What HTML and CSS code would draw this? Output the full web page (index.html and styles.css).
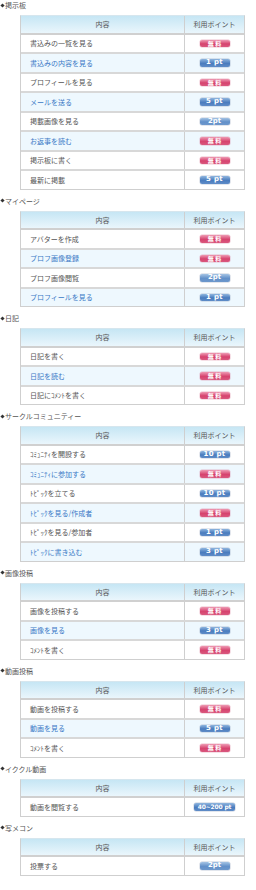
FILE: index.html
```html
<!DOCTYPE html>
<html lang="ja">
<head>
<meta charset="utf-8">
<link rel="stylesheet" href="styles.css">
</head>
<body>
<div class="page">
  <h2 class="sec">掲示板</h2>
  <div class="tbl">
    <div class="row head"><div class="c1">内容</div><div class="c2">利用ポイント</div></div>
    <div class="row"><div class="c1">書込みの一覧を見る</div><div class="c2"><span class="b pink">無 料</span></div></div>
    <div class="row alt"><div class="c1">書込みの内容を見る</div><div class="c2"><span class="b blue">1 pt</span></div></div>
    <div class="row"><div class="c1">プロフィールを見る</div><div class="c2"><span class="b pink">無 料</span></div></div>
    <div class="row alt"><div class="c1">メールを送る</div><div class="c2"><span class="b blue">5 pt</span></div></div>
    <div class="row"><div class="c1">掲載画像を見る</div><div class="c2"><span class="b blue tight">2pt</span></div></div>
    <div class="row alt"><div class="c1">お返事を読む</div><div class="c2"><span class="b pink">無 料</span></div></div>
    <div class="row"><div class="c1">掲示板に書く</div><div class="c2"><span class="b pink">無 料</span></div></div>
    <div class="row"><div class="c1">最新に掲載</div><div class="c2"><span class="b blue">5 pt</span></div></div>
  </div>

  <h2 class="sec">マイページ</h2>
  <div class="tbl">
    <div class="row head"><div class="c1">内容</div><div class="c2">利用ポイント</div></div>
    <div class="row"><div class="c1">アバターを作成</div><div class="c2"><span class="b pink">無 料</span></div></div>
    <div class="row alt"><div class="c1">プロフ画像登録</div><div class="c2"><span class="b pink">無 料</span></div></div>
    <div class="row"><div class="c1">プロフ画像閲覧</div><div class="c2"><span class="b blue tight">2pt</span></div></div>
    <div class="row alt"><div class="c1">プロフィールを見る</div><div class="c2"><span class="b blue">1 pt</span></div></div>
  </div>

  <h2 class="sec">日記</h2>
  <div class="tbl">
    <div class="row head"><div class="c1">内容</div><div class="c2">利用ポイント</div></div>
    <div class="row"><div class="c1">日記を書く</div><div class="c2"><span class="b pink">無 料</span></div></div>
    <div class="row alt"><div class="c1">日記を読む</div><div class="c2"><span class="b pink">無 料</span></div></div>
    <div class="row"><div class="c1">日記にｺﾒﾝﾄを書く</div><div class="c2"><span class="b pink">無 料</span></div></div>
  </div>

  <h2 class="sec">サークルコミュニティー</h2>
  <div class="tbl">
    <div class="row head"><div class="c1">内容</div><div class="c2">利用ポイント</div></div>
    <div class="row"><div class="c1">ｺﾐｭﾆﾃｨを開設する</div><div class="c2"><span class="b blue">10 pt</span></div></div>
    <div class="row alt"><div class="c1">ｺﾐｭﾆﾃｨに参加する</div><div class="c2"><span class="b pink">無 料</span></div></div>
    <div class="row"><div class="c1">ﾄﾋﾟｯｸを立てる</div><div class="c2"><span class="b blue">10 pt</span></div></div>
    <div class="row alt"><div class="c1">ﾄﾋﾟｯｸを見る/作成者</div><div class="c2"><span class="b pink">無 料</span></div></div>
    <div class="row"><div class="c1">ﾄﾋﾟｯｸを見る/参加者</div><div class="c2"><span class="b blue">1 pt</span></div></div>
    <div class="row alt"><div class="c1">ﾄﾋﾟｯｸに書き込む</div><div class="c2"><span class="b blue">3 pt</span></div></div>
  </div>

  <h2 class="sec">画像投稿</h2>
  <div class="tbl">
    <div class="row head"><div class="c1">内容</div><div class="c2">利用ポイント</div></div>
    <div class="row"><div class="c1">画像を投稿する</div><div class="c2"><span class="b pink">無 料</span></div></div>
    <div class="row alt"><div class="c1">画像を見る</div><div class="c2"><span class="b blue">3 pt</span></div></div>
    <div class="row"><div class="c1">ｺﾒﾝﾄを書く</div><div class="c2"><span class="b pink">無 料</span></div></div>
  </div>

  <h2 class="sec">動画投稿</h2>
  <div class="tbl">
    <div class="row head"><div class="c1">内容</div><div class="c2">利用ポイント</div></div>
    <div class="row"><div class="c1">動画を投稿する</div><div class="c2"><span class="b pink">無 料</span></div></div>
    <div class="row alt"><div class="c1">動画を見る</div><div class="c2"><span class="b blue">5 pt</span></div></div>
    <div class="row"><div class="c1">ｺﾒﾝﾄを書く</div><div class="c2"><span class="b pink">無 料</span></div></div>
  </div>

  <h2 class="sec">イククル動画</h2>
  <div class="tbl">
    <div class="row head"><div class="c1">内容</div><div class="c2">利用ポイント</div></div>
    <div class="row"><div class="c1">動画を閲覧する</div><div class="c2"><span class="b blue wide">40~200 pt</span></div></div>
  </div>

  <h2 class="sec">写メコン</h2>
  <div class="tbl">
    <div class="row head"><div class="c1">内容</div><div class="c2">利用ポイント</div></div>
    <div class="row"><div class="c1">投票する</div><div class="c2"><span class="b blue tight">2pt</span></div></div>
  </div>
</div>
</body>
</html>
```

FILE: styles.css
```css
* { box-sizing: border-box; }
html, body { margin: 0; padding: 0; background: #fff; }
body {
  font-family: "Noto Sans CJK JP", "Noto Sans", sans-serif;
  font-size: 7px;
  color: #555;
}
.page { width: 256px; }
.sec {
  margin: 6px 0 0;
  height: 10px;
  line-height: 10px;
  font-size: 7px;
  font-weight: normal;
  color: #555;
  display: flex;
  align-items: center;
}
.sec:first-child { margin-top: 0; }
.sec::before {
  content: "";
  width: 3px;
  height: 3px;
  background: #333;
  transform: rotate(45deg);
  margin: 0 1px 0 1px;
}
.tbl {
  margin: 5px 11px 0 20px;
  width: 225px;
  border: 1px solid #cfcfcf;
  border-top-color: #d6e6ee;
}
.row {
  display: grid;
  grid-template-columns: 164px 1fr;
  height: 19.5px;
  border-top: 2px solid #d8d8d8;
  background: #fff;
  color: #555;
}
.row.alt { background: #eef8fe; color: #3a79c6; }
.row.head {
  height: 16.5px;
  border-top: none;
  background: linear-gradient(#c6e6f4, #eaf6fc);
  color: #555;
}
.row.head + .row { border-top-color: #d0d0d0; }
.c1 {
  display: flex;
  align-items: center;
  padding-left: 9px;
  border-right: 1px solid #cfcfcf;
}
.head .c1 { justify-content: center; padding-left: 0; }
.c2 {
  display: flex;
  align-items: center;
  justify-content: center;
}
.b {
  display: inline-flex;
  align-items: center;
  justify-content: center;
  width: 30px;
  height: 7.5px;
  border-radius: 2px;
  color: #fff;
  font-family: "DejaVu Sans", sans-serif;
  font-weight: bold;
  font-size: 7px;
  letter-spacing: 0.3px;
  line-height: 7px;
  box-shadow: 0 0 0 0.5px rgba(90, 110, 150, 0.35);
}
.b.pink {
  background: linear-gradient(#ee9ab3, #d6436e 55%, #d9587e);
  font-family: "Noto Sans CJK JP", sans-serif;
  font-size: 6px;
  letter-spacing: 0;
  box-shadow: 0 0 0 0.5px rgba(200, 70, 110, 0.35);
}
.b.blue { background: linear-gradient(#8fb5de, #4a7cbe 55%, #5f8cc7); }
.b.tight { letter-spacing: 0; background: linear-gradient(#a4c3e4, #6290c9 55%, #6d98cc); }
.b.wide { width: 41px; letter-spacing: -0.2px; font-size: 6px; }
```
